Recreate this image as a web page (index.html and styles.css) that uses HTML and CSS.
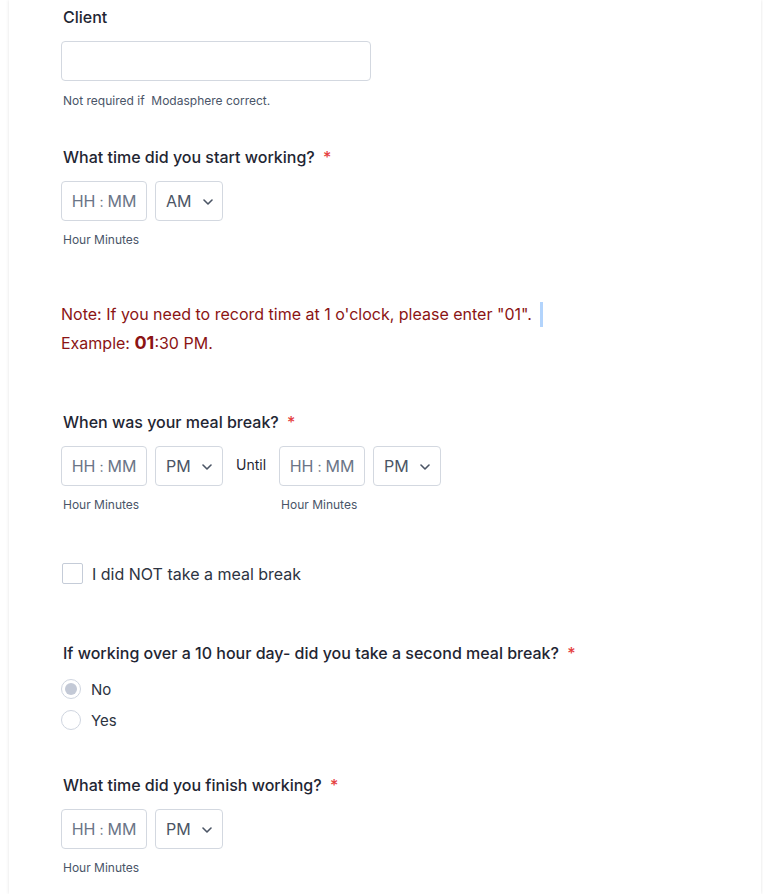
FILE: index.html
```html
<!DOCTYPE html>
<html lang="en">
<head>
<meta charset="utf-8">
<title>Timesheet</title>
<link rel="stylesheet" href="styles.css">
</head>
<body>
<div class="card">
  <div class="field field-client">
    <label class="label">Client</label>
    <input class="text-input" type="text">
    <div class="help">Not required if&nbsp; Modasphere correct.</div>
  </div>

  <div class="field field-start">
    <label class="label">What time did you start working? <span class="req">*</span></label>
    <div class="time-row">
      <div class="time-group">
        <div class="time-box"><span>HH</span><span class="colon">:</span><span>MM</span></div>
        <div class="help">Hour Minutes</div>
      </div>
      <div class="ampm">AM <svg class="chev" width="10" height="6" viewBox="0 0 10 6"><path d="M1 1l4 4 4-4" fill="none" stroke="#4b5565" stroke-width="1.6" stroke-linecap="round" stroke-linejoin="round"/></svg></div>
    </div>
  </div>

  <div class="note">
    <p>Note: If you need to record time at 1 o'clock, please enter "01".<span class="sel"></span></p>
    <p>Example: <b>01</b>:30 PM.</p>
  </div>

  <div class="field field-meal">
    <label class="label">When was your meal break? <span class="req">*</span></label>
    <div class="time-row">
      <div class="time-group">
        <div class="time-box"><span>HH</span><span class="colon">:</span><span>MM</span></div>
        <div class="help">Hour Minutes</div>
      </div>
      <div class="ampm">PM <svg class="chev" width="10" height="6" viewBox="0 0 10 6"><path d="M1 1l4 4 4-4" fill="none" stroke="#4b5565" stroke-width="1.6" stroke-linecap="round" stroke-linejoin="round"/></svg></div>
      <div class="until">Until</div>
      <div class="time-group">
        <div class="time-box"><span>HH</span><span class="colon">:</span><span>MM</span></div>
        <div class="help">Hour Minutes</div>
      </div>
      <div class="ampm">PM <svg class="chev" width="10" height="6" viewBox="0 0 10 6"><path d="M1 1l4 4 4-4" fill="none" stroke="#4b5565" stroke-width="1.6" stroke-linecap="round" stroke-linejoin="round"/></svg></div>
    </div>
  </div>

  <div class="check-row">
    <span class="checkbox"></span>
    <span class="check-label">I did NOT take a meal break</span>
  </div>

  <div class="field field-second">
    <label class="label">If working over a 10 hour day- did you take a second meal break? <span class="req">*</span></label>
    <div class="radio-list">
      <div class="radio-row"><span class="radio checked"></span><span>No</span></div>
      <div class="radio-row"><span class="radio"></span><span>Yes</span></div>
    </div>
  </div>

  <div class="field field-finish">
    <label class="label">What time did you finish working? <span class="req">*</span></label>
    <div class="time-row">
      <div class="time-group">
        <div class="time-box"><span>HH</span><span class="colon">:</span><span>MM</span></div>
        <div class="help">Hour Minutes</div>
      </div>
      <div class="ampm">PM <svg class="chev" width="10" height="6" viewBox="0 0 10 6"><path d="M1 1l4 4 4-4" fill="none" stroke="#4b5565" stroke-width="1.6" stroke-linecap="round" stroke-linejoin="round"/></svg></div>
    </div>
  </div>
</div>
</body>
</html>
```

FILE: styles.css
```css
* { box-sizing: border-box; }

html, body {
  margin: 0;
  padding: 0;
  background: #ffffff;
}

body {
  font-family: Inter, "Noto Sans", sans-serif;
  color: #1f2937;
  height: 894px;
  overflow: hidden;
  padding: 0 2px 0 9px;
}

.card {
  background: #ffffff;
  min-height: 894px;
  width: 752px;
  box-shadow: -1px 0 3px rgba(0, 0, 0, 0.06), 1px 0 3px rgba(0, 0, 0, 0.06);
  padding: 7px 0 0 52px;
}

.label {
  display: block;
  font-size: 16px;
  font-weight: 500;
  line-height: 20px;
  color: #1f2633;
}

.req {
  color: #e53e3e;
  margin-left: 4px;
}

.help {
  font-size: 12px;
  line-height: 16px;
  color: #4a5568;
  margin-top: 11px;
  padding-left: 2px;
}

.text-input {
  display: block;
  width: 310px;
  height: 40px;
  margin-top: 14px;
  border: 1px solid #d3d8e0;
  border-radius: 4px;
  background: #fff;
  font: inherit;
}

.field-client .help { margin-top: 12px; }
.field-client .label { padding-left: 1px; }
.field .label { padding-left: 2px; }

.field-start { margin-top: 38px; }

.time-row {
  display: flex;
  align-items: flex-start;
  gap: 8px;
  margin-top: 14px;
}

.time-box {
  width: 86px;
  height: 40px;
  border: 1px solid #d3d8e0;
  border-radius: 4px;
  display: flex;
  align-items: center;
  justify-content: center;
  gap: 4px;
  font-size: 16px;
  color: #6b7587;
}

.colon { font-size: 14px; }

.ampm {
  width: 68px;
  height: 40px;
  border: 1px solid #d3d8e0;
  border-radius: 4px;
  display: flex;
  align-items: center;
  padding-left: 10px;
  gap: 11px;
  font-size: 16px;
  color: #4b5565;
}

.chev { margin-top: 1px; }

.until {
  font-size: 14px;
  color: #1f2633;
  padding: 10px 5px 0 5px;
}

.note {
  margin-top: 52px;
  color: #8b1414;
  font-size: 16px;
  line-height: 29px;
}

.note p { margin: 0; }

.note b {
  font-size: 18px;
  font-weight: 700;
  line-height: 1;
}

.sel {
  display: inline-block;
  width: 3px;
  height: 25px;
  background: #b3d4fc;
  vertical-align: -7px;
  margin-left: 8px;
}

.field-meal { margin-top: 54px; }

.check-row {
  display: flex;
  align-items: center;
  gap: 9px;
  margin-top: 50px;
  padding-left: 1px;
}

.checkbox {
  width: 21px;
  height: 21px;
  border: 1px solid #c5ccd8;
  border-radius: 2px;
  background: #fff;
}

.check-label {
  font-size: 16px;
  color: #2d3442;
}

.field-second { margin-top: 59px; }

.radio-list {
  margin-top: 16px;
  display: flex;
  flex-direction: column;
  gap: 11px;
}

.radio-row {
  display: flex;
  align-items: center;
  gap: 10px;
  font-size: 15px;
  color: #2d3442;
}

.radio {
  width: 20px;
  height: 20px;
  border: 1px solid #cfd5df;
  border-radius: 50%;
  background: #fff;
  position: relative;
}

.radio.checked::after {
  content: "";
  position: absolute;
  left: 3px;
  top: 3px;
  width: 12px;
  height: 12px;
  border-radius: 50%;
  background: #c3c9d6;
}

.field-finish { margin-top: 45px; }
```
